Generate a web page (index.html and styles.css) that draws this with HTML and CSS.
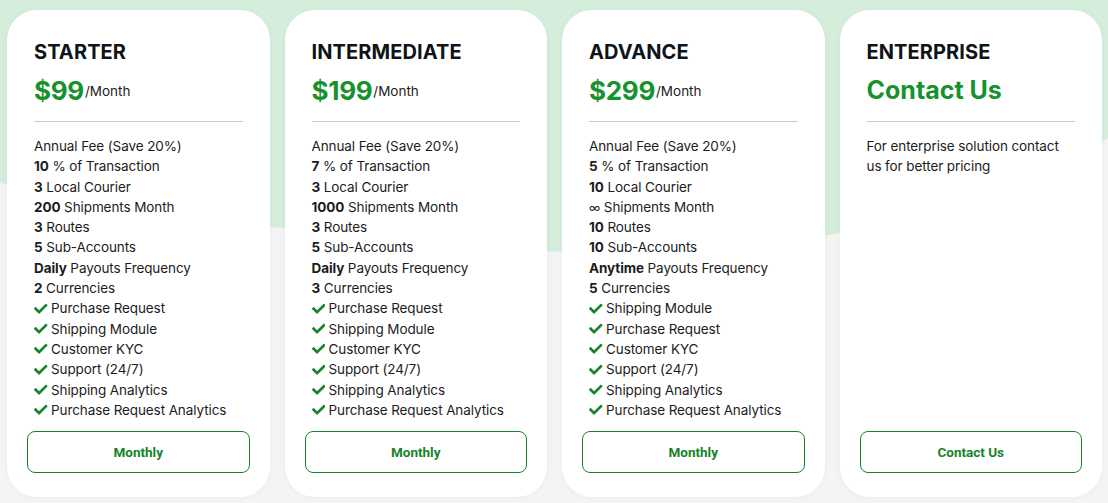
FILE: index.html
```html
<!DOCTYPE html>
<html lang="en">
<head>
<meta charset="utf-8">
<title>Pricing</title>
<link rel="stylesheet" href="styles.css">
</head>
<body>
<svg class="bg-wave" width="1108" height="503" viewBox="0 0 1108 503" preserveAspectRatio="none" aria-hidden="true">
  <rect x="0" y="0" width="1108" height="503" fill="#f4f4f4"/>
  <path d="M0 0 H1108 V138 C800 320 350 245 0 183 Z" fill="#d5eedc"/>
</svg>
<main class="plans">
  <section class="card">
    <div class="card-body">
      <h2 class="plan-name">STARTER</h2>
      <div class="price"><span class="amount">$99</span><span class="per">/Month</span></div>
      <hr class="divider">
      <ul class="features">
        <li>Annual Fee (Save 20%)</li>
        <li><b>10</b> % of Transaction</li>
        <li><b>3</b> Local Courier</li>
        <li><b>200</b> Shipments Month</li>
        <li><b>3</b> Routes</li>
        <li><b>5</b> Sub-Accounts</li>
        <li><b>Daily</b> Payouts Frequency</li>
        <li><b>2</b> Currencies</li>
        <li class="check"><svg class="tick" viewBox="0 0 512 512"><path d="M173.9 439.4L7.5 273c-10-10-10-26.2 0-36.2l36.2-36.2c10-10 26.2-10 36.2 0L192 312.7 432.1 72.6c10-10 26.2-10 36.2 0l36.2 36.2c10 10 10 26.2 0 36.2L210.1 439.4c-10 10-26.2 10-36.2 0z"/></svg>Purchase Request</li>
        <li class="check"><svg class="tick" viewBox="0 0 512 512"><path d="M173.9 439.4L7.5 273c-10-10-10-26.2 0-36.2l36.2-36.2c10-10 26.2-10 36.2 0L192 312.7 432.1 72.6c10-10 26.2-10 36.2 0l36.2 36.2c10 10 10 26.2 0 36.2L210.1 439.4c-10 10-26.2 10-36.2 0z"/></svg>Shipping Module</li>
        <li class="check"><svg class="tick" viewBox="0 0 512 512"><path d="M173.9 439.4L7.5 273c-10-10-10-26.2 0-36.2l36.2-36.2c10-10 26.2-10 36.2 0L192 312.7 432.1 72.6c10-10 26.2-10 36.2 0l36.2 36.2c10 10 10 26.2 0 36.2L210.1 439.4c-10 10-26.2 10-36.2 0z"/></svg>Customer KYC</li>
        <li class="check"><svg class="tick" viewBox="0 0 512 512"><path d="M173.9 439.4L7.5 273c-10-10-10-26.2 0-36.2l36.2-36.2c10-10 26.2-10 36.2 0L192 312.7 432.1 72.6c10-10 26.2-10 36.2 0l36.2 36.2c10 10 10 26.2 0 36.2L210.1 439.4c-10 10-26.2 10-36.2 0z"/></svg>Support (24/7)</li>
        <li class="check"><svg class="tick" viewBox="0 0 512 512"><path d="M173.9 439.4L7.5 273c-10-10-10-26.2 0-36.2l36.2-36.2c10-10 26.2-10 36.2 0L192 312.7 432.1 72.6c10-10 26.2-10 36.2 0l36.2 36.2c10 10 10 26.2 0 36.2L210.1 439.4c-10 10-26.2 10-36.2 0z"/></svg>Shipping Analytics</li>
        <li class="check"><svg class="tick" viewBox="0 0 512 512"><path d="M173.9 439.4L7.5 273c-10-10-10-26.2 0-36.2l36.2-36.2c10-10 26.2-10 36.2 0L192 312.7 432.1 72.6c10-10 26.2-10 36.2 0l36.2 36.2c10 10 10 26.2 0 36.2L210.1 439.4c-10 10-26.2 10-36.2 0z"/></svg>Purchase Request Analytics</li>
      </ul>
    </div>
    <button class="plan-btn">Monthly</button>
  </section>

  <section class="card">
    <div class="card-body">
      <h2 class="plan-name">INTERMEDIATE</h2>
      <div class="price"><span class="amount">$199</span><span class="per">/Month</span></div>
      <hr class="divider">
      <ul class="features">
        <li>Annual Fee (Save 20%)</li>
        <li><b>7</b> % of Transaction</li>
        <li><b>3</b> Local Courier</li>
        <li><b>1000</b> Shipments Month</li>
        <li><b>3</b> Routes</li>
        <li><b>5</b> Sub-Accounts</li>
        <li><b>Daily</b> Payouts Frequency</li>
        <li><b>3</b> Currencies</li>
        <li class="check"><svg class="tick" viewBox="0 0 512 512"><path d="M173.9 439.4L7.5 273c-10-10-10-26.2 0-36.2l36.2-36.2c10-10 26.2-10 36.2 0L192 312.7 432.1 72.6c10-10 26.2-10 36.2 0l36.2 36.2c10 10 10 26.2 0 36.2L210.1 439.4c-10 10-26.2 10-36.2 0z"/></svg>Purchase Request</li>
        <li class="check"><svg class="tick" viewBox="0 0 512 512"><path d="M173.9 439.4L7.5 273c-10-10-10-26.2 0-36.2l36.2-36.2c10-10 26.2-10 36.2 0L192 312.7 432.1 72.6c10-10 26.2-10 36.2 0l36.2 36.2c10 10 10 26.2 0 36.2L210.1 439.4c-10 10-26.2 10-36.2 0z"/></svg>Shipping Module</li>
        <li class="check"><svg class="tick" viewBox="0 0 512 512"><path d="M173.9 439.4L7.5 273c-10-10-10-26.2 0-36.2l36.2-36.2c10-10 26.2-10 36.2 0L192 312.7 432.1 72.6c10-10 26.2-10 36.2 0l36.2 36.2c10 10 10 26.2 0 36.2L210.1 439.4c-10 10-26.2 10-36.2 0z"/></svg>Customer KYC</li>
        <li class="check"><svg class="tick" viewBox="0 0 512 512"><path d="M173.9 439.4L7.5 273c-10-10-10-26.2 0-36.2l36.2-36.2c10-10 26.2-10 36.2 0L192 312.7 432.1 72.6c10-10 26.2-10 36.2 0l36.2 36.2c10 10 10 26.2 0 36.2L210.1 439.4c-10 10-26.2 10-36.2 0z"/></svg>Support (24/7)</li>
        <li class="check"><svg class="tick" viewBox="0 0 512 512"><path d="M173.9 439.4L7.5 273c-10-10-10-26.2 0-36.2l36.2-36.2c10-10 26.2-10 36.2 0L192 312.7 432.1 72.6c10-10 26.2-10 36.2 0l36.2 36.2c10 10 10 26.2 0 36.2L210.1 439.4c-10 10-26.2 10-36.2 0z"/></svg>Shipping Analytics</li>
        <li class="check"><svg class="tick" viewBox="0 0 512 512"><path d="M173.9 439.4L7.5 273c-10-10-10-26.2 0-36.2l36.2-36.2c10-10 26.2-10 36.2 0L192 312.7 432.1 72.6c10-10 26.2-10 36.2 0l36.2 36.2c10 10 10 26.2 0 36.2L210.1 439.4c-10 10-26.2 10-36.2 0z"/></svg>Purchase Request Analytics</li>
      </ul>
    </div>
    <button class="plan-btn">Monthly</button>
  </section>

  <section class="card">
    <div class="card-body">
      <h2 class="plan-name">ADVANCE</h2>
      <div class="price"><span class="amount">$299</span><span class="per">/Month</span></div>
      <hr class="divider">
      <ul class="features">
        <li>Annual Fee (Save 20%)</li>
        <li><b>5</b> % of Transaction</li>
        <li><b>10</b> Local Courier</li>
        <li><span class="inf">∞</span> Shipments Month</li>
        <li><b>10</b> Routes</li>
        <li><b>10</b> Sub-Accounts</li>
        <li><b>Anytime</b> Payouts Frequency</li>
        <li><b>5</b> Currencies</li>
        <li class="check"><svg class="tick" viewBox="0 0 512 512"><path d="M173.9 439.4L7.5 273c-10-10-10-26.2 0-36.2l36.2-36.2c10-10 26.2-10 36.2 0L192 312.7 432.1 72.6c10-10 26.2-10 36.2 0l36.2 36.2c10 10 10 26.2 0 36.2L210.1 439.4c-10 10-26.2 10-36.2 0z"/></svg>Shipping Module</li>
        <li class="check"><svg class="tick" viewBox="0 0 512 512"><path d="M173.9 439.4L7.5 273c-10-10-10-26.2 0-36.2l36.2-36.2c10-10 26.2-10 36.2 0L192 312.7 432.1 72.6c10-10 26.2-10 36.2 0l36.2 36.2c10 10 10 26.2 0 36.2L210.1 439.4c-10 10-26.2 10-36.2 0z"/></svg>Purchase Request</li>
        <li class="check"><svg class="tick" viewBox="0 0 512 512"><path d="M173.9 439.4L7.5 273c-10-10-10-26.2 0-36.2l36.2-36.2c10-10 26.2-10 36.2 0L192 312.7 432.1 72.6c10-10 26.2-10 36.2 0l36.2 36.2c10 10 10 26.2 0 36.2L210.1 439.4c-10 10-26.2 10-36.2 0z"/></svg>Customer KYC</li>
        <li class="check"><svg class="tick" viewBox="0 0 512 512"><path d="M173.9 439.4L7.5 273c-10-10-10-26.2 0-36.2l36.2-36.2c10-10 26.2-10 36.2 0L192 312.7 432.1 72.6c10-10 26.2-10 36.2 0l36.2 36.2c10 10 10 26.2 0 36.2L210.1 439.4c-10 10-26.2 10-36.2 0z"/></svg>Support (24/7)</li>
        <li class="check"><svg class="tick" viewBox="0 0 512 512"><path d="M173.9 439.4L7.5 273c-10-10-10-26.2 0-36.2l36.2-36.2c10-10 26.2-10 36.2 0L192 312.7 432.1 72.6c10-10 26.2-10 36.2 0l36.2 36.2c10 10 10 26.2 0 36.2L210.1 439.4c-10 10-26.2 10-36.2 0z"/></svg>Shipping Analytics</li>
        <li class="check"><svg class="tick" viewBox="0 0 512 512"><path d="M173.9 439.4L7.5 273c-10-10-10-26.2 0-36.2l36.2-36.2c10-10 26.2-10 36.2 0L192 312.7 432.1 72.6c10-10 26.2-10 36.2 0l36.2 36.2c10 10 10 26.2 0 36.2L210.1 439.4c-10 10-26.2 10-36.2 0z"/></svg>Purchase Request Analytics</li>
      </ul>
    </div>
    <button class="plan-btn">Monthly</button>
  </section>

  <section class="card">
    <div class="card-body">
      <h2 class="plan-name">ENTERPRISE</h2>
      <div class="price"><span class="amount contact">Contact Us</span></div>
      <hr class="divider">
      <p class="note">For enterprise solution contact us for better pricing</p>
    </div>
    <button class="plan-btn">Contact Us</button>
  </section>
</main>
</body>
</html>
```

FILE: styles.css
```css
* { box-sizing: border-box; }

html, body {
  margin: 0;
  padding: 0;
  width: 1108px;
  height: 503px;
  overflow: hidden;
  background: #f4f4f4;
  font-family: "Inter", "Liberation Sans", sans-serif;
  color: #1c1c1c;
}

.bg-wave {
  position: absolute;
  left: 0;
  top: 0;
  z-index: 0;
}

.plans {
  position: relative;
  z-index: 1;
  display: flex;
  gap: 15px;
  padding: 10px 6px 6px 7px;
}

.card {
  width: 263px;
  height: 487px;
  background: #ffffff;
  border-radius: 30px;
  box-shadow: 0 1px 6px rgba(0, 0, 0, 0.04);
  padding: 28px 20px 24px 20px;
  display: flex;
  flex-direction: column;
}

.card-body {
  padding: 0 7px;
  flex: 1;
}

.plan-name {
  margin: 0;
  font-size: 20px;
  line-height: 28px;
  font-weight: 700;
  color: #0f1419;
  letter-spacing: 0.1px;
}

.price {
  margin-top: 8px;
  display: flex;
  align-items: center;
  height: 32px;
}

.amount {
  font-size: 26px;
  font-weight: 700;
  color: #16922d;
  letter-spacing: -0.3px;
}

.amount.contact {
  font-size: 25px;
  letter-spacing: 0;
}

.per {
  font-size: 13.5px;
  color: #1c1c1c;
  margin-left: 1px;
  padding-top: 1px;
}

.divider {
  border: 0;
  border-top: 1px solid #c9c9c9;
  margin: 15px 0 14px 0;
}

.features {
  list-style: none;
  margin: 0;
  padding: 0;
  font-size: 13.5px;
  letter-spacing: -0.1px;
  line-height: 20.3px;
}

.features li {
  white-space: nowrap;
  height: 20.3px;
}

.features b {
  font-weight: 700;
}

.check {
  display: flex;
  align-items: center;
}

.tick {
  width: 13.5px;
  height: 13.5px;
  fill: #15842a;
  margin-right: 3.5px;
  flex: none;
}

.inf {
  font-size: 12px;
  line-height: 1;
}

.note {
  margin: 0;
  font-size: 13.5px;
  letter-spacing: -0.1px;
  line-height: 20.3px;
}

.plan-btn {
  width: 100%;
  height: 42px;
  background: #ffffff;
  border: 1.5px solid #16832a;
  border-radius: 8px;
  color: #16832a;
  font-family: "Roboto", "Liberation Sans", sans-serif;
  font-weight: 700;
  font-size: 13.5px;
  cursor: pointer;
}
```
